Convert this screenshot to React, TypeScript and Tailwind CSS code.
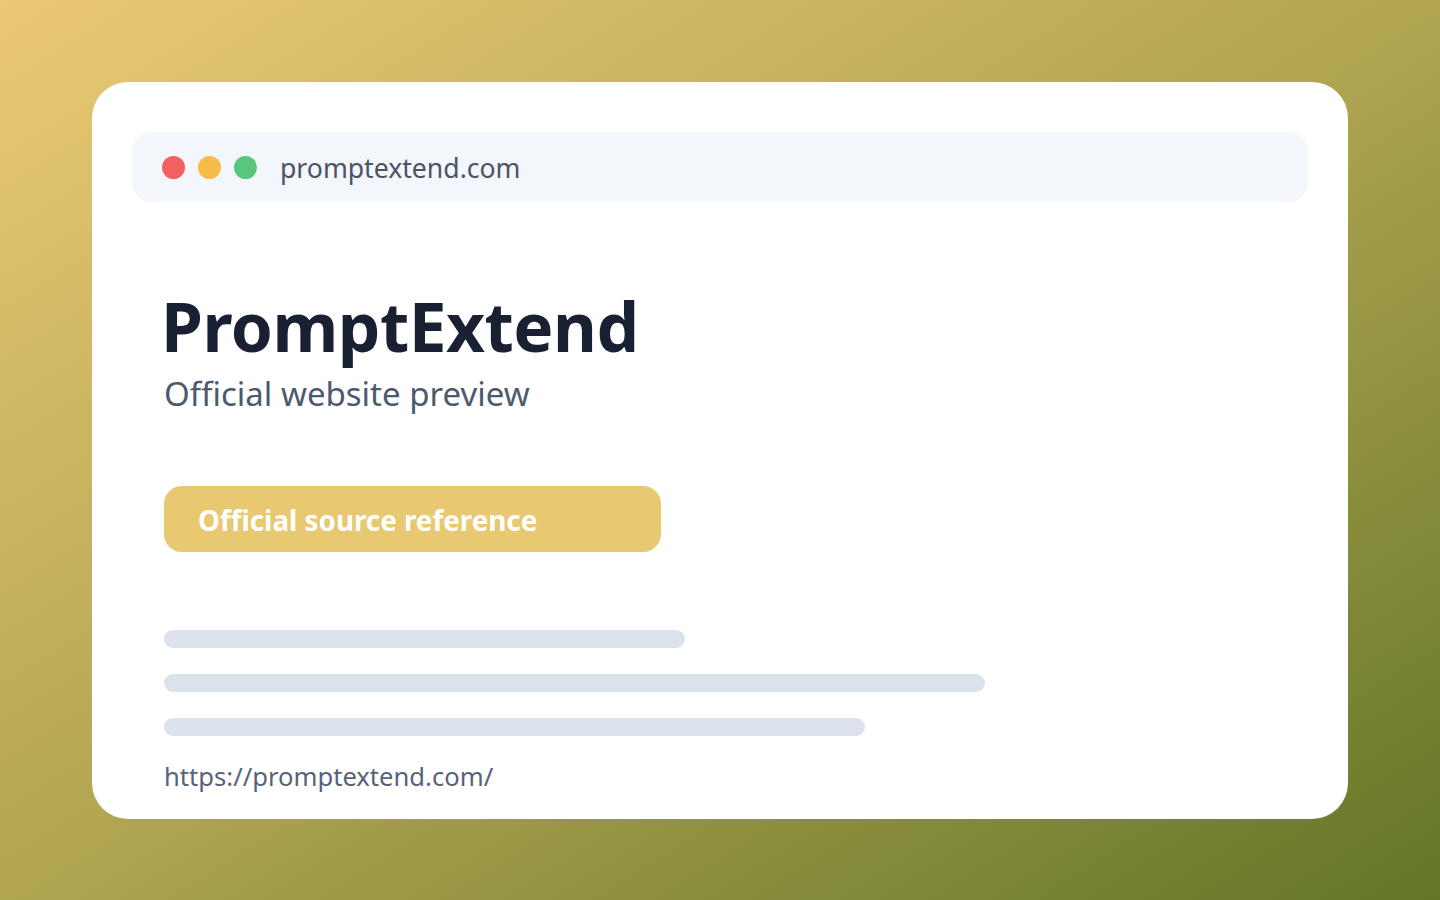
export default function App() {
  const font = { fontFamily: '"Noto Sans", "Open Sans", Arial, sans-serif' }
  return (
    <div
      className="h-[900px] w-full bg-linear-to-br from-[#ecc974] via-[#b1a552] to-[#627626] px-[92px] pt-[82px] pb-[81px]"
      style={font}
    >
      <div className="flex h-full flex-col rounded-[36px] bg-white px-10 pt-[50px]">
        {/* address bar */}
        <div className="flex h-[70px] items-center rounded-[20px] bg-[#f3f6fb] pl-[30px]">
          <div className="flex gap-[13px]">
            <span className="h-[23px] w-[23px] rounded-full bg-[#f26060]" />
            <span className="h-[23px] w-[23px] rounded-full bg-[#f5bc48]" />
            <span className="h-[23px] w-[23px] rounded-full bg-[#58c77c]" />
          </div>
          <span className="mt-[3px] ml-[23px] text-[26.6px] text-[#4a5466]">promptextend.com</span>
        </div>

        <div className="px-8">
          <h1 className="-ml-[3px] mt-[86px] text-[67.5px] leading-[76px] font-bold tracking-[-0.5px] text-[#182032]">
            PromptExtend
          </h1>
          <p className="mt-[8px] text-[33px] leading-[44px] text-[#4c5a70]">Official website preview</p>

          <div className="mt-[70px] flex h-[66px] w-[497px] items-center rounded-[18px] bg-[#e8c870] pl-[34px]">
            <span className="mt-[4px] text-[27.8px] font-bold text-white">Official source reference</span>
          </div>

          <div className="mt-[78px] flex flex-col gap-[26px]">
            <div className="h-[18px] w-[521px] rounded-full bg-[#dce2ec]" />
            <div className="h-[18px] w-[821px] rounded-full bg-[#dce2ec]" />
            <div className="h-[18px] w-[701px] rounded-full bg-[#dce2ec]" />
          </div>

          <p className="mt-[24px] text-[25.6px] leading-[34px] text-[#566379]">https://promptextend.com/</p>
        </div>
      </div>
    </div>
  )
}
